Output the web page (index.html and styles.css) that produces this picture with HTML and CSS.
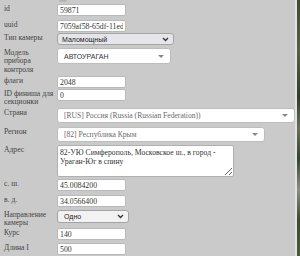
FILE: index.html
```html
<!DOCTYPE html>
<html lang="ru">
<head>
  <meta charset="UTF-8">
  <title>Камера</title>
  <link rel="stylesheet" href="styles.css">
</head>
<body>
  <div class="page">
    <form class="panel">
      <div class="stub"></div>

      <label class="lbl" for="id">id</label>
      <input class="inp" type="text" id="id" value="59871">

      <label class="lbl" for="uuid">uuid</label>
      <input class="inp" type="text" id="uuid" value="7059af58-65df-11ed-9f3c-0050569b1c22">

      <div class="lbl">Тип камеры</div>
      <div class="sel sel-grey">
        <span>Маломощный</span>
        <svg width="7" height="5" viewBox="0 0 7 5"><path d="M1 1l2.5 2.5L6 1" fill="none" stroke="#333" stroke-width="1.3"/></svg>
      </div>

      <div class="lbl">Модель прибора контроля</div>
      <div class="s2 s2-model"><span class="s2-text dark">АВТОУРАГАН</span><span class="tri"></span></div>

      <label class="lbl" for="flags">флаги</label>
      <input class="inp" type="text" id="flags" value="2048">

      <label class="lbl" for="finish">ID финиша для секционки</label>
      <input class="inp" type="text" id="finish" value="0">

      <div class="lbl">Страна</div>
      <div class="s2 s2-wide"><span class="s2-text">[RUS] Россия (Russia (Russian Federation))</span><span class="tri"></span></div>

      <div class="lbl">Регион</div>
      <div class="s2 s2-region"><span class="s2-text">[82] Республика Крым</span><span class="tri"></span></div>

      <label class="lbl" for="addr">Адрес</label>
      <textarea class="area" id="addr">82-УЮ Симферополь, Московское ш., в город - Ураган-Юг в спину</textarea>

      <label class="lbl" for="lat">с. ш.</label>
      <input class="inp" type="text" id="lat" value="45.0084200">

      <label class="lbl" for="lon">в. д.</label>
      <input class="inp" type="text" id="lon" value="34.0566400">

      <div class="lbl">Направление камеры</div>
      <div class="sel sel-light sel-dir">
        <span>Одно</span>
        <svg width="7" height="5" viewBox="0 0 7 5"><path d="M1 1l2.5 2.5L6 1" fill="none" stroke="#333" stroke-width="1.3"/></svg>
      </div>

      <label class="lbl" for="course">Курс</label>
      <input class="inp" type="text" id="course" value="140">

      <label class="lbl" for="len">Длина I</label>
      <input class="inp" type="text" id="len" value="500">
    </form>
    <div class="divider"></div>
    <div class="map"></div>
  </div>
</body>
</html>
```

FILE: styles.css
```css
* {
  box-sizing: border-box;
}
body {
  margin: 0;
  background-color: #cacaca;
  font-family: "Liberation Serif", serif;
  color: #333;
}
.page {
  display: flex;
  height: 256px;
  overflow: hidden;
}
.panel {
  width: 295px;
  display: grid;
  grid-template-columns: 53px 1fr;
  grid-template-rows: 3px 16px 13px 15px 28px 13px 19px 19px 18px 34px 16px 15px 18px 15px 15px;
  padding-left: 4px;
  align-items: start;
}
.stub {
  grid-column: 2;
  width: 8px;
  height: 2px;
  margin-left: 2px;
  background: #b4b4b4;
  border-radius: 0 0 2px 2px;
}
.lbl {
  font-size: 7.6px;
  line-height: 8.3px;
  margin-top: 2px;
  color: #444;
  grid-column: 1;
}
.inp {
  width: 69px;
  height: 12px;
  margin-top: 1px;
  padding: 0 2px;
  border: 1px solid #b9b9b9;
  border-radius: 2px;
  background: #fff;
  font-family: "Liberation Serif", serif;
  font-size: 7.8px;
  color: #333;
  outline: none;
}
.sel {
  display: flex;
  align-items: center;
  justify-content: space-between;
  width: 117px;
  height: 12px;
  margin-top: 1px;
  padding: 0 4px;
  border: 1px solid #a4a4a8;
  border-radius: 3px;
  font-family: "Liberation Sans", sans-serif;
  font-size: 7px;
  color: #222;
}
.sel-grey {
  background: #e6e6ea;
}
.sel-light {
  background: #f2f2f2;
}
.sel-dir {
  width: 72px;
  height: 13px;
  padding-left: 6px;
}
.s2 {
  display: flex;
  align-items: center;
  justify-content: space-between;
  height: 15px;
  margin-top: 1px;
  padding: 0 6px;
  background: #fff;
  border: 1px solid #bdbdbd;
  border-radius: 3px;
}
.s2-model {
  width: 114px;
  height: 16px;
}
.s2-wide {
  width: 238px;
}
.s2-region {
  width: 208px;
}
.s2-text {
  font-size: 7.6px;
  color: #6a6a6a;
  white-space: nowrap;
}
.s2-text.dark {
  font-family: "Liberation Sans", sans-serif;
  font-size: 7px;
  color: #333;
}
.tri {
  width: 0;
  height: 0;
  border-left: 3px solid transparent;
  border-right: 3px solid transparent;
  border-top: 3px solid #888;
}
.area {
  width: 177px;
  height: 32px;
  margin-top: 1px;
  padding: 2px;
  border: 1px solid #b0b0b0;
  border-radius: 2px;
  background: #fff;
  font-family: "Liberation Serif", serif;
  font-size: 7.7px;
  line-height: 9px;
  color: #333;
  resize: both;
  outline: none;
}
.divider {
  width: 2px;
  background: #e2e2e2;
}
.map {
  flex: 1;
  background: linear-gradient(180deg, #3d4a33 0%, #566046 20%, #2f3d28 38%, #6a6f5a 50%, #34432b 62%, #8b8f80 74%, #3b4a30 86%, #4c5a3c 100%);
}
```
